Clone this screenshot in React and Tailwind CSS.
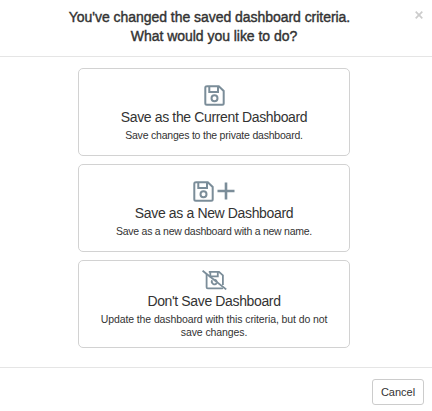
const SaveIcon = () => (
    <svg width="21" height="21" viewBox="0 0 21 21" fill="none" stroke="#7b8d99" strokeWidth="2">
        <path d="M2.5 1.3H14.8L19.7 6V18.2Q19.7 19.7 18.2 19.7H2.8Q1.3 19.7 1.3 18.2V2.8Q1.3 1.3 2.8 1.3Z" />
        <path d="M5.3 1.5V7.1H14V1.5" />
        <circle cx="10.5" cy="13.2" r="3" />
    </svg>
);

const PlusIcon = () => (
    <svg width="18" height="18" viewBox="0 0 18 18" stroke="#7b8d99" strokeWidth="2.6">
        <path d="M9 0.5V17.5M0.5 9H17.5" />
    </svg>
);

const NoSaveIcon = () => (
    <svg width="25" height="20" viewBox="0 0 25 20" fill="none" stroke="#7b8d99" strokeWidth="1.8">
        <path d="M4.6 4V17.2Q4.6 18.4 5.8 18.4H19.6Q20.3 18.4 20.8 18" />
        <path d="M6.8 1.9H17L20.9 5.4V15" />
        <path d="M8.3 2V6.4H15.8V2" />
        <path d="M10.2 10.3A2.5 2.5 0 1 0 14.7 13" />
        <path d="M12.6 9.6Q14.6 9.8 14.9 11.8" />
        <path d="M0.6 0.7L24.2 19.4" />
    </svg>
);

const OptionCard = ({ icon, title, children }) => (
    <button className="flex h-[88px] w-[272px] flex-col items-center justify-center rounded-[5px] border-[1.5px] border-[#d2d2d2] bg-white">
        <span className="flex items-center gap-[3px]">{icon}</span>
        <span className="mt-px text-[14px] leading-[20px] tracking-[-0.36px]">{title}</span>
        {children}
    </button>
);

const App = () => {
    return (
        <div className="flex h-[411px] w-[432px] flex-col bg-white font-['Liberation_Sans',Arial,sans-serif] text-[#333]">
            {/* header */}
            <header className="relative h-[57px] shrink-0 border-b border-[#e5e5e5] pt-[8px] pr-[4px] text-center">
                <h4 className="text-[14px] leading-[19px] tracking-[-0.04px] [-webkit-text-stroke:0.4px_#333]">
                    <span className="block pr-[9px]">You've changed the saved dashboard criteria.</span>
                    <span className="block">What would you like to do?</span>
                </h4>
                <button aria-label="Close" className="absolute top-[11px] right-[9px] text-[#ccc]">
                    <svg width="8" height="8" viewBox="0 0 8 8" stroke="currentColor" strokeWidth="1.7">
                        <path d="M0.7 0.7L7.3 7.3M7.3 0.7L0.7 7.3" />
                    </svg>
                </button>
            </header>

            {/* save options */}
            <main className="flex flex-1 flex-col items-center gap-[8px] pt-[11px] pr-[4px]">
                <OptionCard icon={<SaveIcon />} title="Save as the Current Dashboard">
                    <span className="-mb-[4px] text-[10.5px] leading-[17px] tracking-[-0.21px]">Save changes to the private dashboard.</span>
                </OptionCard>
                <OptionCard icon={<><SaveIcon /><PlusIcon /></>} title="Save as a New Dashboard">
                    <span className="-mb-[4px] text-[10.5px] leading-[17px] tracking-[-0.25px]">Save as a new dashboard with a new name.</span>
                </OptionCard>
                <OptionCard icon={<NoSaveIcon />} title="Don't Save Dashboard">
                    <span className="mt-[2px] text-[10.5px] leading-[13px] tracking-[-0.1px]">
                        Update the dashboard with this criteria, but do not
                        <br />
                        save changes.
                    </span>
                </OptionCard>
            </main>

            {/* footer */}
            <footer className="flex h-[44px] shrink-0 justify-end border-t border-[#e5e5e5] pt-[11px] pr-[8px]">
                <button className="h-[26px] w-[52px] rounded-[3px] border border-[#ccc] text-[11px]">Cancel</button>
            </footer>
        </div>
    );
};

export default App;
